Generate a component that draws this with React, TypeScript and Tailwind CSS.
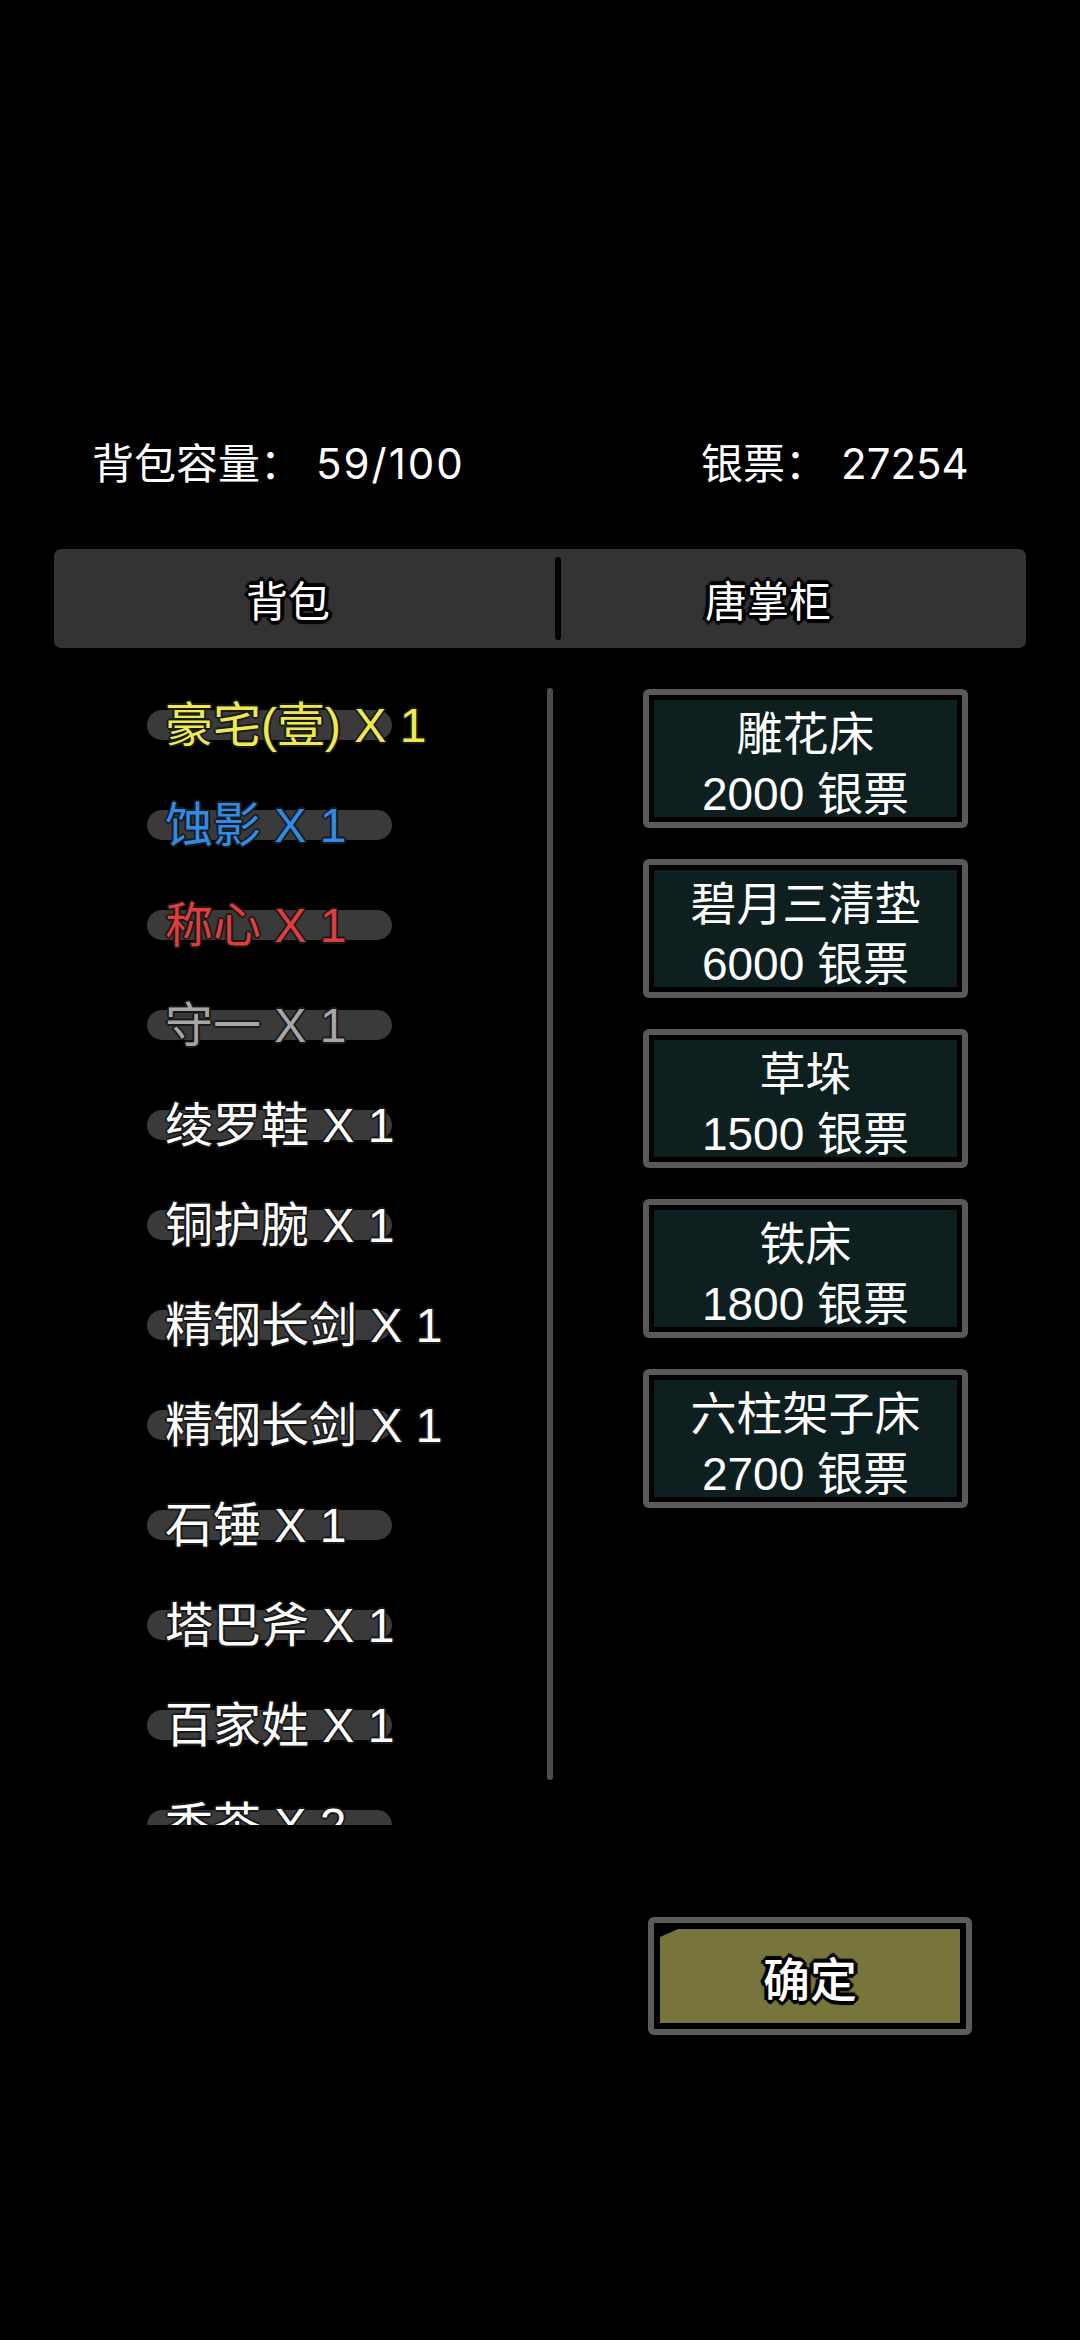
import React from "react"

const font = "[font-family:'Noto_Sans_CJK_SC','Noto_Sans',sans-serif]"
const latinFont = "[font-family:'Liberation_Sans','Noto_Sans_CJK_SC',sans-serif]"
const headerFont = "[font-family:Inter,'Noto_Sans_CJK_SC',sans-serif]"

const items = [
  { name: "豪宅(壹) X 1", color: "text-[#eeea4e]" },
  { name: "蚀影 X 1", color: "text-[#2e8ce8]" },
  { name: "称心 X 1", color: "text-[#e23d3d]" },
  { name: "守一 X 1", color: "text-[#a6a6a6]" },
  { name: "绫罗鞋 X 1", color: "text-white" },
  { name: "铜护腕 X 1", color: "text-white" },
  { name: "精钢长剑 X 1", color: "text-white" },
  { name: "精钢长剑 X 1", color: "text-white" },
  { name: "石锤 X 1", color: "text-white" },
  { name: "塔巴斧 X 1", color: "text-white" },
  { name: "百家姓 X 1", color: "text-white" },
  { name: "香茶 X 2", color: "text-white" },
]

const goods = [
  { name: "雕花床", price: 2000 },
  { name: "碧月三清垫", price: 6000 },
  { name: "草垛", price: 1500 },
  { name: "铁床", price: 1800 },
  { name: "六柱架子床", price: 2700 },
]

function ItemRow({ name, color }: { name: string; color: string }) {
  return (
    <div className="relative h-[100px] shrink-0 flex items-center">
      <div className="absolute left-0 top-[37px] w-[245px] h-[30px] rounded-full bg-[#3a3a3a]" />
      <span
        className={`relative mt-[6px] pl-[18px] whitespace-nowrap text-[48px] leading-none ${latinFont} ${color} [text-shadow:0_0_2px_#111,2px_0_0_#1c1c1c,-2px_0_0_#1c1c1c,0_2px_0_#1c1c1c,0_-2px_0_#1c1c1c,1px_1px_0_#1c1c1c,-1px_-1px_0_#1c1c1c,1px_-1px_0_#1c1c1c,-1px_1px_0_#1c1c1c]`}
      >
        {name}
      </span>
    </div>
  )
}

function GoodsCard({ name, price }: { name: string; price: number }) {
  return (
    <div className="w-[325px] h-[139px] rounded-[6px] bg-[#595959] p-[6px]">
      <div className="h-full bg-black p-[5px]">
        <div
          className={`h-full bg-[#0e1f1f] flex flex-col items-center justify-center pt-[10px] text-white text-[46px] leading-[60px] whitespace-nowrap ${latinFont}`}
        >
          <span>{name}</span>
          <span>{price} 银票</span>
        </div>
      </div>
    </div>
  )
}

const heavyOutline =
  "[text-shadow:3px_0_0_#000,-3px_0_0_#000,0_3px_0_#000,0_-3px_0_#000,2px_2px_0_#000,-2px_-2px_0_#000,2px_-2px_0_#000,-2px_2px_0_#000,4px_0_1px_#000,-4px_0_1px_#000,0_4px_1px_#000,0_-4px_1px_#000]"

export default function App() {
  return (
    <div className={`w-[1080px] h-[2340px] bg-black overflow-hidden pt-[443px] ${font}`}>
      {/* header */}
      <div className={`flex h-[42px] text-white text-[42px] leading-none whitespace-nowrap ${headerFont}`}>
        <div className="w-[701px] pl-[92px]">
          背包容量：<span className="ml-[14px] tracking-[2px]">59/100</span>
        </div>
        <div>
          银票：<span className="ml-[14px]">27254</span>
        </div>
      </div>

      {/* tabs */}
      <div className="mt-[64px] ml-[54px] w-[972px] h-[99px] rounded-[7px] bg-[#333333] flex items-center">
        <div className={`w-[501px] pr-[33px] text-center text-white text-[42px] leading-none ${heavyOutline}`}>
          背包
        </div>
        <div className="w-[6px] h-[83px] rounded-full bg-black" />
        <div className={`w-[465px] pr-[51px] text-center text-white text-[42px] leading-none ${heavyOutline}`}>
          唐掌柜
        </div>
      </div>

      {/* content */}
      <div className="mt-[25px] flex">
        <div className="w-[547px] h-[1152px] overflow-hidden pl-[147px] flex flex-col">
          {items.map((it, i) => (
            <ItemRow key={i} name={it.name} color={it.color} />
          ))}
        </div>
        <div className="mt-[15px] w-[6px] h-[1092px] rounded-full bg-[#4d4d4d]" />
        <div className="ml-[90px] mt-[16px] flex flex-col gap-[31px]">
          {goods.map((g) => (
            <GoodsCard key={g.name} name={g.name} price={g.price} />
          ))}
        </div>
      </div>

      {/* confirm */}
      <div className="mt-[92px] ml-[648px] w-[324px] h-[118px] rounded-[6px] bg-[#5b5b5b] p-[6px]">
        <div className="h-full bg-black p-[6px]">
          <div className="h-full bg-[#77753b] [clip-path:polygon(18px_0,100%_0,100%_100%,0_100%,0_8px)] flex items-center justify-center">
            <span className={`text-white text-[47px] leading-none font-medium ${heavyOutline}`}>确定</span>
          </div>
        </div>
      </div>
    </div>
  )
}
